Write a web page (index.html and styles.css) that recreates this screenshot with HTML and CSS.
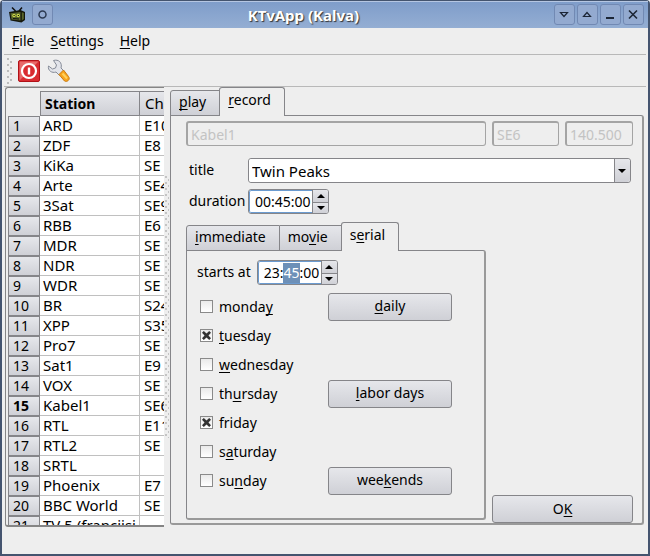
FILE: index.html
```html
<!DOCTYPE html>
<html lang="en">
<head>
    <meta charset="UTF-8">
    <meta name="viewport" content="width=device-width, initial-scale=1.0">
    <title>KTvApp (Kalva)</title>
    <link rel="stylesheet" href="styles.css">
</head>
<body>

    <div class="window">
        <header class="titlebar">
            <svg class="app-icon" width="16" height="16" viewBox="0 0 16 16">
                <path d="M3 0.500l3.500 3.500M13 0.500l-3 3.500" stroke="#111" stroke-width="1.500"/>
                <path d="M0 5l11.500-2 4.500 2v8l-3.500 2.500-11-2z" fill="#15170c"/>
                <path d="M1.500 6.300l10-1.300v8.500l-9-1z" fill="#59652b"/>
                <path d="M12.800 5.200l2 .8v6l-2 1.500z" fill="#59652b"/>
                <circle cx="5" cy="8.500" r="1.700" fill="#cbd847"/>
                <circle cx="9.200" cy="8.500" r="1.700" fill="#cbd847"/>
                <path d="M4.500 8.500h1.200M8.800 8.500h1.200M4 11.500l6 .5" stroke="#111"/>
            </svg>
            <button class="title-btn" type="button" aria-label="Sticky">
                <svg width="19" height="19" viewBox="0 0 19 19"><circle cx="9.500" cy="9.500" r="3.500" fill="none" stroke="#2c3a52" stroke-width="1.500"/></svg>
            </button>
            <h1>KTvApp (Kalva)</h1>
            <button class="title-btn" type="button" aria-label="Below">
                <svg width="19" height="19" viewBox="0 0 19 19"><path d="M5.500 7.500h7l-3.500 4z" fill="none" stroke="#1c2636" stroke-width="1.200"/></svg>
            </button>
            <button class="title-btn" type="button" aria-label="Above">
                <svg width="19" height="19" viewBox="0 0 19 19"><path d="M5.500 11.500h7l-3.500-4z" fill="none" stroke="#1c2636" stroke-width="1.200"/></svg>
            </button>
            <button class="title-btn" type="button" aria-label="Minimize">
                <svg width="19" height="19" viewBox="0 0 19 19"><path d="M5 13h8" stroke="#1c2636" stroke-width="2"/></svg>
            </button>
            <button class="title-btn" type="button" aria-label="Close">
                <svg width="19" height="19" viewBox="0 0 19 19"><path d="M5 5.500l8 8M13 5.500l-8 8" stroke="#1c2636" stroke-width="1.600"/></svg>
            </button>
        </header>

        <nav class="menubar">
            <a href="#"><u>F</u>ile</a>
            <a href="#"><u>S</u>ettings</a>
            <a href="#"><u>H</u>elp</a>
        </nav>

        <div class="toolbar">
            <svg width="6" height="26" viewBox="0 0 6 26">
                <path d="M2 0v26" stroke="#bcbcbc" stroke-width="2" stroke-dasharray="2 4"/>
                <path d="M5 3v23" stroke="#bcbcbc" stroke-width="2" stroke-dasharray="2 4"/>
            </svg>
            <button class="tool-btn" type="button" aria-label="Quit">
                <svg width="22" height="22" viewBox="0 0 22 22">
                    <rect x="0.500" y="0.500" width="21" height="21" rx="1.500" fill="#d92b30" stroke="#b01117"/>
                    <path d="M1.500 20.500v-19h19z" fill="#e86a6a"/>
                    <circle cx="11" cy="11" r="7" fill="#d92b30" stroke="#fff" stroke-width="2.200"/>
                    <path d="M11 7.500v7" stroke="#fff" stroke-width="2.400"/>
                </svg>
            </button>
            <button class="tool-btn" type="button" aria-label="Configure">
                <svg width="24" height="24" viewBox="0 0 24 24">
                    <path d="M7.500 1.500c5-1.500 9 2 7.500 7.500l3 3-4.500 4.500-3.500-3.500c-4 1.500-8.500-1.500-7.500-6l4 3 3-1 1-3z" fill="#e2e4ea" stroke="#858b98"/>
                    <path d="M13 15.500l4.500-4.500 5 6.500c1.200 1.700.8 3-.3 4s-2.400 1.200-3.700.5z" fill="#f9a41b" stroke="#c77a12"/>
                    <path d="M16.500 14.500l4.500 5" stroke="#ffd15c" stroke-width="2"/>
                </svg>
            </button>
        </div>

        <main class="content">
            <section class="stations">
                <table>
                    <thead>
                        <tr><td></td><th class="current">Station</th><th>Channel</th></tr>
                    </thead>
                    <tbody>
                        <tr><th>1</th><td>ARD</td><td>E10</td></tr>
                        <tr><th>2</th><td>ZDF</td><td>E8</td></tr>
                        <tr><th>3</th><td>KiKa</td><td>SE</td></tr>
                        <tr><th>4</th><td>Arte</td><td>SE4</td></tr>
                        <tr><th>5</th><td>3Sat</td><td>SE9</td></tr>
                        <tr><th>6</th><td>RBB</td><td>E6</td></tr>
                        <tr><th>7</th><td>MDR</td><td>SE</td></tr>
                        <tr><th>8</th><td>NDR</td><td>SE</td></tr>
                        <tr><th>9</th><td>WDR</td><td>SE</td></tr>
                        <tr><th>10</th><td>BR</td><td>S24</td></tr>
                        <tr><th>11</th><td>XPP</td><td>S35</td></tr>
                        <tr><th>12</th><td>Pro7</td><td>SE</td></tr>
                        <tr><th>13</th><td>Sat1</td><td>E9</td></tr>
                        <tr><th>14</th><td>VOX</td><td>SE</td></tr>
                        <tr><th class="current">15</th><td>Kabel1</td><td>SE6</td></tr>
                        <tr><th>16</th><td>RTL</td><td>E11</td></tr>
                        <tr><th>17</th><td>RTL2</td><td>SE</td></tr>
                        <tr><th>18</th><td>SRTL</td><td></td></tr>
                        <tr><th>19</th><td>Phoenix</td><td>E7</td></tr>
                        <tr><th>20</th><td>BBC World</td><td>SE</td></tr>
                        <tr><th>21</th><td>TV 5 (françijsi</td><td></td></tr>
                    </tbody>
                </table>
            </section>

            <div class="splitter"></div>

            <section class="side">
                <div class="tabs" role="tablist">
                    <button class="tab" type="button" role="tab"><u>p</u>lay</button>
                    <button class="tab active" type="button" role="tab" aria-selected="true"><u>r</u>ecord</button>
                </div>
                <form class="panel record">
                    <div class="info">
                        <input type="text" class="field" value="Kabel1" aria-label="Station" disabled>
                        <input type="text" class="field" value="SE6" aria-label="Channel" disabled>
                        <input type="text" class="field" value="140.500" aria-label="Frequency" disabled>
                    </div>
                    <div class="row">
                        <label for="title">title</label>
                        <div class="combo">
                            <select id="title"><option>Twin Peaks</option></select>
                        </div>
                    </div>
                    <div class="row">
                        <label for="duration">duration</label>
                        <div class="spin">
                            <input type="text" id="duration" value="00:45:00">
                            <button type="button" class="up" aria-label="Up"></button>
                            <button type="button" class="down" aria-label="Down"></button>
                        </div>
                    </div>
                    <div class="bottom">
                        <div class="modes">
                            <div class="tabs" role="tablist">
                                <button class="tab" type="button" role="tab"><u>i</u>mmediate</button>
                                <button class="tab" type="button" role="tab">mo<u>v</u>ie</button>
                                <button class="tab active" type="button" role="tab" aria-selected="true">s<u>e</u>rial</button>
                            </div>
                            <div class="panel serial">
                                <div class="start">
                                    <label for="start">starts at</label>
                                    <div class="spin">
                                        <input type="text" id="start" value="23:45:00">
                                        <button type="button" class="up" aria-label="Up"></button>
                                        <button type="button" class="down" aria-label="Down"></button>
                                    </div>
                                </div>
                                <div class="days">
                                    <label><input type="checkbox">monda<u>y</u></label>
                                    <button type="button" class="btn"><u>d</u>aily</button>
                                    <label><input type="checkbox" checked><u>t</u>uesday</label>
                                    <label><input type="checkbox"><u>w</u>ednesday</label>
                                    <label><input type="checkbox">th<u>u</u>rsday</label>
                                    <button type="button" class="btn"><u>l</u>abor days</button>
                                    <label><input type="checkbox" checked>friday</label>
                                    <label><input type="checkbox">s<u>a</u>turday</label>
                                    <label><input type="checkbox">su<u>n</u>day</label>
                                    <button type="button" class="btn">wee<u>k</u>ends</button>
                                </div>
                            </div>
                        </div>
                        <button type="submit" class="btn">O<u>K</u></button>
                    </div>
                </form>
            </section>
        </main>
    </div>

    <script>
        // minutes section of the start time is being edited
        const start = document.getElementById("start");
        start.focus();
        start.setSelectionRange(3, 5);
    </script>

</body>
</html>
```
FILE: styles.css
```css
* {
    box-sizing: border-box;
}
body {
    margin: 0;
    font-family: "Noto Sans", "Open Sans", sans-serif;
    font-size: 14px;
    line-height: 20px;
    color: #000;
    background: #eee;
}
button, input, select {
    font: inherit;
    color: inherit;
    margin: 0;
    padding: 0;
}
svg {
    display: block;
}
u {
    text-underline-offset: 2px;
    text-decoration-skip-ink: none;
}
.window {
    display: flex;
    flex-direction: column;
    height: 100vh;
    border: 2px solid #44546f;
    border-top-width: 1px;
    border-radius: 4px 4px 0 0;
}

/* title bar */
.titlebar {
    display: flex;
    align-items: center;
    gap: 2px;
    height: 27px;
    padding: 0 4px 1px 7px;
    border-top: 1px solid #b5c6e2;
    background: linear-gradient(#7f9dca, #94aed3);
}
.titlebar h1 {
    flex: 1;
    margin: 0;
    text-align: center;
    font-size: 15px;
    line-height: 20px;
    color: #fff;
    text-shadow: 1px 1px 1px #333;
}
.app-icon {
    margin-right: 5px;
}
.title-btn {
    width: 21px;
    height: 21px;
    border: 1px solid #7189b3;
    border-radius: 3px;
    background: #93aad0;
}

/* menu and tool bar */
.menubar {
    display: flex;
    gap: 16px;
    height: 27px;
    margin: 0 2px;
    padding: 3px 8px;
    border-bottom: 1px solid #b8b8b8;
}
.menubar a {
    color: #000;
    text-decoration: none;
}
.toolbar {
    display: flex;
    align-items: center;
    gap: 6px;
    height: 32px;
    margin: 0 2px;
    padding: 0 2px;
    border-bottom: 1px solid #b8b8b8;
}
.tool-btn {
    border: none;
    background: none;
}

.content {
    display: flex;
    flex: 1;
    min-height: 0;
    padding: 0 4px 27px 3px;
}

/* station list */
.stations {
    flex: 0 0 159px;
    overflow: hidden;
    padding: 3px 0 0 2px;
    border: 1px solid #858585;
    border-right: none;
    border-bottom-width: 2px;
    border-radius: 3px 0 0 3px;
}
.stations table {
    width: 200px;
    table-layout: fixed;
    border-collapse: separate;
    border-spacing: 0;
}
.stations tr > :first-child {
    width: 32px;
}
.stations tr > :nth-child(2) {
    width: 100px;
}
.stations td, .stations th {
    height: 20px;
    padding: 0 3px;
    line-height: 19px;
    font-weight: normal;
    text-align: left;
    white-space: nowrap;
    overflow: hidden;
}
.stations tbody td {
    font-size: 15px;
    background: #fff;
    border-right: 1px solid #c0c0c0;
    border-bottom: 1px solid #c0c0c0;
}
.stations tbody td:nth-child(3) {
    padding-left: 4px;
}
.stations th {
    background: linear-gradient(#e6e7eb, #cfd0d6);
    border: 1px solid #858589;
    border-width: 1px 1px 1px 0;
}
.stations thead th {
    height: 25px;
    padding: 0 5px;
    font-size: 15px;
}
.stations thead th:nth-child(2) {
    font-size: 14px;
    border-left-width: 1px;
    padding-left: 4px;
}
.stations tbody th {
    padding: 0 4px;
    line-height: 18px;
    border-left-width: 1px;
}
.stations .current {
    font-weight: bold;
}
.splitter {
    align-self: center;
    flex: 0 0 6px;
    height: 262px;
    background:
        conic-gradient(from 270deg at 2px 2px, #c4c4c4 90deg, transparent 0) 1px 0 / 6px 6px,
        conic-gradient(from 270deg at 1px 2px, #c4c4c4 90deg, transparent 0) 4px 3px / 6px 6px;
}

/* tabs */
.tabs {
    display: flex;
    align-items: flex-end;
    height: 29px;
    margin-bottom: -1px;
}
.tab {
    height: 26px;
    padding: 0 13px 2px 8px;
    border: 1px solid #858589;
    border-left-width: 0;
    background: linear-gradient(#e6e7eb, #cfd0d6);
}
.tab:first-child {
    border-left-width: 1px;
    border-radius: 3px 0 0 0;
}
.tab.active {
    position: relative;
    height: 29px;
    padding: 0 13px 4px 8px;
    border-left-width: 1px;
    border-bottom: none;
    border-radius: 3px 3px 0 0;
    margin-left: -1px;
    background: #eee;
}
.panel {
    flex: 1;
    border: 1px solid #858589;
    border-right: 2px solid #999;
    border-bottom: 2px solid #999;
    border-radius: 0 3px 3px 3px;
}

/* record form */
.side {
    display: flex;
    flex-direction: column;
    flex: 1;
    min-width: 0;
    margin-bottom: 2px;
}
.record {
    display: flex;
    flex-direction: column;
    padding: 5px 9px 0 15px;
}
.info, .bottom {
    display: grid;
    grid-template-columns: 1fr 67px 68px;
    gap: 6px;
}
.info {
    margin-bottom: 12px;
}
.field, .combo, .spin {
    height: 25px;
    border: 1px solid #858589;
    border-radius: 3px;
}
.field {
    width: 100%;
    padding: 0 3px;
    color: #c3c3c3;
    background: #eee;
    border: 2px solid #a4a4a4;
    border-width: 2px 1px 1px 2px;
}
.row {
    display: flex;
    align-items: center;
    margin-bottom: 6px;
    padding: 0 2px;
}
.row label {
    width: 60px;
    padding-left: 1px;
}
.row label, .start label {
    padding-bottom: 2px;
}
.combo {
    position: relative;
    flex: 1;
    background: #fff;
}
.combo select {
    appearance: none;
    display: block;
    width: 100%;
    height: 23px;
    padding: 0 3px;
    border: none;
    border-radius: 3px;
    font-size: 15px;
    background: linear-gradient(#e6e7eb, #cfd0d6) right / 16px 100% no-repeat #fff;
}
.combo::before {
    content: "";
    position: absolute;
    top: 0;
    right: 15px;
    bottom: 0;
    border-left: 1px solid #858589;
}
.combo::after {
    content: "";
    position: absolute;
    top: 10px;
    right: 4px;
    border: 4px solid transparent;
    border-top-color: #000;
    border-bottom: none;
    pointer-events: none;
}
.spin {
    display: grid;
    grid-template-columns: 1fr 16px;
    grid-template-rows: 12px 11px;
    width: 81px;
    overflow: hidden;
    background: #fff;
}
.spin input {
    grid-row: 1 / 3;
    width: 100%;
    min-width: 0;
    padding-left: 5px;
    border: 1px solid #6b9bd0;
    border-right: none;
    border-radius: 2px 0 0 2px;
    outline: none;
    background: #fff;
}
.spin input::selection {
    color: #fff;
    background: #6d90b8;
}
.spin button {
    display: flex;
    align-items: center;
    justify-content: center;
    border: none;
    border-left: 1px solid #858589;
    background: linear-gradient(#e6e7eb, #cfd0d6);
}
.spin .down {
    border-top: 1px solid #858589;
}
.spin button::before {
    content: "";
    border: 4px solid transparent;
}
.spin .up::before {
    border-bottom-color: #000;
    border-top: none;
}
.spin .down::before {
    border-top-color: #000;
    border-bottom: none;
}

/* lower part: recording modes and OK */
.bottom {
    flex: 1;
    margin-top: 2px;
}
.bottom > .btn {
    grid-column: 2 / 4;
    align-self: end;
}
.modes {
    display: flex;
    flex-direction: column;
    margin-bottom: 3px;
}
.serial {
    padding: 9px 10px;
}
.start {
    display: flex;
    align-items: center;
    gap: 6px;
    margin-bottom: 7px;
}
.days {
    display: grid;
    grid-template-columns: 131px 124px;
    grid-auto-rows: 29px;
    align-items: center;
}
.days label {
    grid-column: 1;
    display: flex;
    align-items: center;
    padding-left: 3px;
    white-space: pre;
}
.days input {
    appearance: none;
    display: grid;
    place-items: center;
    width: 13px;
    height: 13px;
    margin-right: 6px;
    border: 1px solid #8a8a8a;
    background: linear-gradient(#eaeaea, #fff);
}
.days input:checked::before {
    content: "";
    width: 9px;
    height: 9px;
    background: #333;
    clip-path: polygon(0 20%, 20% 0, 50% 28%, 80% 0, 100% 20%, 72% 50%, 100% 80%, 80% 100%, 50% 72%, 20% 100%, 0 80%, 28% 50%);
}
.btn {
    height: 28px;
    padding-bottom: 1px;
    border: 1px solid #858589;
    border-radius: 3px;
    background: linear-gradient(#e6e7eb, #cfd0d6);
}
```
